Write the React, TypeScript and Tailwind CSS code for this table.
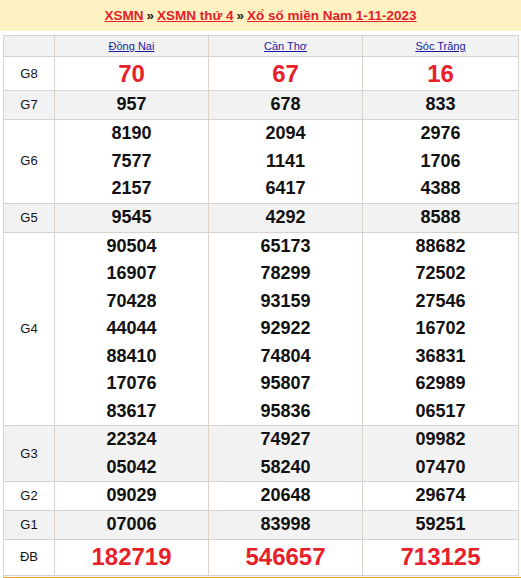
import React from "react";

type Row = { label: string; h: string; bg: string; kind: "big" | "normal" | "db"; vals: string[][] };

const rows: Row[] = [
  { label: "G8", h: "h-[34px]", bg: "bg-white", kind: "big", vals: [["70"], ["67"], ["16"]] },
  { label: "G7", h: "h-[29px]", bg: "bg-[#f2f2f2]", kind: "normal", vals: [["957"], ["678"], ["833"]] },
  {
    label: "G6",
    h: "h-[83px]",
    bg: "bg-white",
    kind: "normal",
    vals: [
      ["8190", "7577", "2157"],
      ["2094", "1141", "6417"],
      ["2976", "1706", "4388"],
    ],
  },
  { label: "G5", h: "h-[29px]", bg: "bg-[#f2f2f2]", kind: "normal", vals: [["9545"], ["4292"], ["8588"]] },
  {
    label: "G4",
    h: "h-[193px]",
    bg: "bg-white",
    kind: "normal",
    vals: [
      ["90504", "16907", "70428", "44044", "88410", "17076", "83617"],
      ["65173", "78299", "93159", "92922", "74804", "95807", "95836"],
      ["88682", "72502", "27546", "16702", "36831", "62989", "06517"],
    ],
  },
  {
    label: "G3",
    h: "h-[56px]",
    bg: "bg-[#f2f2f2]",
    kind: "normal",
    vals: [
      ["22324", "05042"],
      ["74927", "58240"],
      ["09982", "07470"],
    ],
  },
  { label: "G2", h: "h-[28px]", bg: "bg-white", kind: "normal", vals: [["09029"], ["20648"], ["29674"]] },
  { label: "G1", h: "h-[29px]", bg: "bg-[#f2f2f2]", kind: "normal", vals: [["07006"], ["83998"], ["59251"]] },
  { label: "ĐB", h: "h-[36px]", bg: "bg-white", kind: "db", vals: [["182719"], ["546657"], ["713125"]] },
];

const cities = ["Đồng Nai", "Cần Thơ", "Sóc Trăng"];

export default function App() {
  return (
    <div className="w-[521px] h-[578px] bg-white overflow-hidden" style={{ fontFamily: '"Liberation Sans", Arial, sans-serif' }}>
      <div className="h-[31px] bg-[#fff2c2] flex items-center justify-center text-[13.5px] font-bold leading-none pt-[1px]">
        <a className="text-[#e5202a] underline">XSMN</a>
        <span className="text-[#1a1a1a] mx-[3px]">»</span>
        <a className="text-[#e5202a] underline">XSMN thứ 4</a>
        <span className="text-[#1a1a1a] mx-[3px]">»</span>
        <a className="text-[#e5202a] underline">Xổ số miền Nam 1-11-2023</a>
      </div>
      <div className="h-[4px]" />
      <table className="ml-[3px] w-[515px] border-collapse table-fixed leading-none">
        <colgroup>
          <col className="w-[51px]" />
          <col className="w-[154px]" />
          <col className="w-[154px]" />
          <col className="w-[156px]" />
        </colgroup>
        <tbody>
          <tr className="h-[21px] bg-[#f2f2f2]">
            <td className="border border-[#d8d2cb] p-0 leading-none" />
            {cities.map((c) => (
              <td key={c} className="border border-[#d8d2cb] p-0 text-center align-middle leading-none">
                <div className="text-[11px] text-[#1a1aa0] underline leading-[14px]">{c}</div>
              </td>
            ))}
          </tr>
          {rows.map((r) => (
            <tr key={r.label} className={`${r.h} ${r.bg}`}>
              <td className="border border-[#d8d2cb] p-0 text-center align-middle text-[13px] leading-[16px] text-[#111]">{r.label}</td>
              {r.vals.map((col, i) => (
                <td key={i} className="border border-[#d8d2cb] p-0 text-center align-middle leading-none">
                  {col.map((v) => (
                    <div
                      key={v}
                      className={
                        r.kind === "normal"
                          ? "text-[18px] font-bold text-[#111] leading-[27.5px]"
                          : "text-[24px] font-bold text-[#e8202a] leading-[30px]"
                      }
                    >
                      {v}
                    </div>
                  ))}
                </td>
              ))}
            </tr>
          ))}
        </tbody>
      </table>
      <div className="mt-[1px] ml-[3px] h-[3px] bg-[#f7941d]" />
    </div>
  );
}
